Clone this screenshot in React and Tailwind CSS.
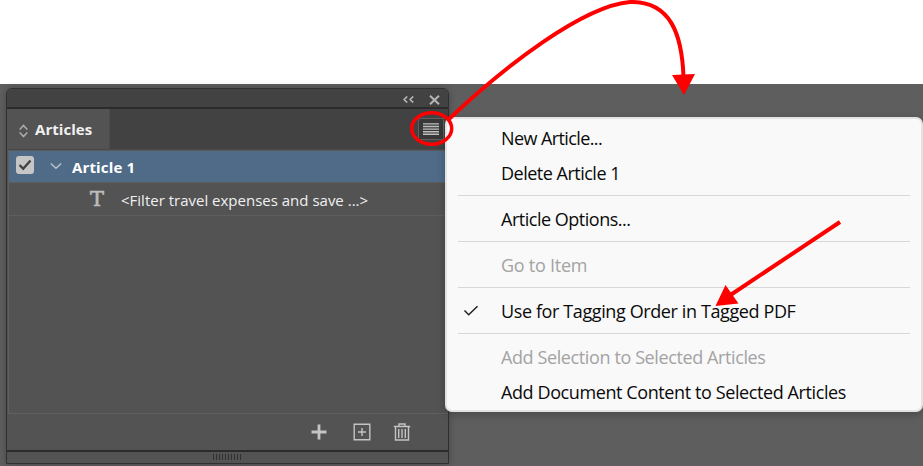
import React from "react";

const TEXT = "font-['Open_Sans','Noto_Sans',sans-serif] whitespace-nowrap";

function MenuItem({ children, disabled, checked, spacing }) {
  return (
    <div className={`flex h-[35px] items-center text-[18px] ${disabled ? "text-[#a3a3a3]" : "text-[#0a0a0a]"}`}>
      <div className="flex w-[54px] items-center pl-[16px]">
        {checked && (
          <svg className="mb-[2px] h-[14px] w-[16px]" viewBox="0 0 16 14" fill="none" stroke="#222" strokeWidth="1.5">
            <path d="M1.5 6.5 5.700 10.700 14.500 2.200" />
          </svg>
        )}
      </div>
      <span className={`${TEXT} ${spacing}`}>{children}</span>
    </div>
  );
}

function Separator() {
  return <div className="mx-[11px] mb-[6px] mt-[4px] h-px bg-[#d7d7d7]" />;
}

function ContextMenu() {
  return (
    <div className="absolute left-[445px] top-[117px] h-[295px] w-[478px] rounded-[7px] border-2 border-[#e3e3e3] bg-[#f9f9f9] pt-[2px] shadow-[0_3px_9px_rgba(0,0,0,0.22)]">
      <MenuItem spacing="tracking-[-0.6px]">New Article...</MenuItem>
      <MenuItem spacing="tracking-[-0.5px]">Delete Article 1</MenuItem>
      <Separator />
      <MenuItem spacing="tracking-[-0.48px]">Article Options...</MenuItem>
      <Separator />
      <MenuItem disabled spacing="tracking-[-0.25px]">Go to Item</MenuItem>
      <Separator />
      <MenuItem checked spacing="tracking-[-0.39px]">Use for Tagging Order in Tagged PDF</MenuItem>
      <Separator />
      <MenuItem disabled spacing="tracking-[-0.39px]">Add Selection to Selected Articles</MenuItem>
      <MenuItem spacing="tracking-[-0.4px]">Add Document Content to Selected Articles</MenuItem>
    </div>
  );
}

function Panel() {
  return (
    <div className="ml-[6px] mt-[4px] flex h-[376px] w-[443px] flex-col overflow-hidden rounded-t-[6px] border border-[#303030] bg-[#535353] shadow-[0_0_7px_rgba(0,0,0,0.25)]">
      <div className="flex h-[20px] shrink-0 items-center justify-end border-b-2 border-[#2b2b2b] bg-[#424242] pr-[8px] pt-[3px]">
        <svg className="mr-[15px] h-[7px] w-[11px]" viewBox="0 0 11 7" fill="none" stroke="#b4b4b4" strokeWidth="1.700">
          <path d="M4.200.5 1.200 3.500 4.200 6.500M10.200.5 7.200 3.500 10.200 6.500" />
        </svg>
        <svg className="h-[10px] w-[11px]" viewBox="0 0 11 10" stroke="#b4b4b4" strokeWidth="2">
          <path d="M1 .7 10 9.300M10 .7 1 9.300" />
        </svg>
      </div>
      <div className="flex h-[40px] shrink-0 bg-[#424242]">
        <div className="flex w-[103px] items-center border-r border-[#4b4b4b] bg-[#535353] pl-[12px] pt-px">
          <svg className="mt-[2px] h-[14px] w-[9px]" viewBox="0 0 9 14" fill="none" stroke="#aaa" strokeWidth="1.600">
            <path d="M1.200 5.700V5L4.500 1.500 7.800 5v.7M1.200 8.300V9l3.300 3.500L7.800 9v-.7" />
          </svg>
          <span className={`${TEXT} ml-[7px] text-[15px] font-bold tracking-[0.05px] text-[#f0f0f0]`}>Articles</span>
        </div>
        <div className="ml-auto mr-[4px] mt-[9px] flex h-[22px] w-[26px] items-center justify-center border border-[#606060] bg-[#383838]">
          <svg className="h-[12px] w-[16px]" viewBox="0 0 16 12" stroke="#c0c0c0" strokeWidth="1.400">
            <path d="M0 .9h16M0 3.500h16M0 6.100h16M0 8.700h16M0 11.300h16" />
          </svg>
        </div>
      </div>
      <div className="h-[2px] shrink-0 border-t border-[#494949] bg-[#5a5a5a]" />
      <div className="ml-px flex h-[263px] shrink-0 flex-col border-b border-l border-[#606060]">
        <div className="flex h-[32px] shrink-0 items-center border-b border-[#5e5e5e] bg-[#4f6b87] pl-[7px]">
          <div className="mb-[3px] flex size-[18px] items-center justify-center rounded-[3px] bg-[#c6c6c6]">
            <svg className="h-[12px] w-[14px]" viewBox="0 0 14 12" fill="none" stroke="#444" strokeWidth="2.400">
              <path d="M1.500 6 5.200 9.700 12.500 1.500" />
            </svg>
          </div>
          <svg className="mb-px ml-[16px] h-[8px] w-[12px]" viewBox="0 0 12 8" fill="none" stroke="#b9c2cb" strokeWidth="1.500">
            <path d="M.8 1.500 6 6.300 11.200 1.500" />
          </svg>
          <span className={`${TEXT} ml-[10px] mt-px text-[15px] font-bold tracking-[0.15px] text-white`}>Article 1</span>
        </div>
        <div className="flex h-[33px] shrink-0 items-center border-b border-[#5e5e5e] pl-[80px]">
          <span className="w-[16px] text-center font-['DejaVu_Serif',serif] text-[21px] leading-none text-[#bdbdbd] [-webkit-text-stroke:0.6px_#bdbdbd]">T</span>
          <span className={`${TEXT} ml-[16px] mt-[3px] text-[15px] text-[#f0f0f0]`}>&lt;Filter travel expenses and save ...&gt;</span>
        </div>
      </div>
      <div className="flex h-[36px] shrink-0 items-center pb-px pl-[304px]">
        <svg className="h-[16px] w-[16px]" viewBox="0 0 16 16" stroke="#c4c4c4" strokeWidth="2.800">
          <path d="M8 .5v15M.5 8h15" />
        </svg>
        <svg className="ml-[26px] h-[18px] w-[18px]" viewBox="0 0 18 18" fill="none" stroke="#c4c4c4" strokeWidth="1.400">
          <path d="M1.200 1.200h15.600v15.600H1.200zM9 5v8M5 9h8" />
        </svg>
        <svg className="ml-[22px] h-[18px] w-[18px]" viewBox="0 0 18 18" fill="none" stroke="#c4c4c4" strokeWidth="1.400">
          <path d="M.8 3.500h16.400M6 3V1h6v2M2.500 4v13h13V4M5.700 6v9M9 6v9M12.300 6v9" />
        </svg>
      </div>
      <div className="flex grow items-center justify-center border-t-2 border-[#2b2b2b]">
        <div className="mr-[2px] mb-[2px] flex h-[6px] gap-[2px]">
          {Array.from({ length: 10 }, (_, i) => (
            <div key={i} className="w-px bg-[#303030]" />
          ))}
        </div>
      </div>
    </div>
  );
}

export default function App() {
  return (
    <div className="relative h-[466px] w-[923px] overflow-hidden bg-white pt-[84px]">
      <div className="flex h-[382px] bg-[#5e5e5e]">
        <Panel />
      </div>
      <ContextMenu />
      <svg className="absolute left-0 top-0 h-[466px] w-[923px]" viewBox="0 0 923 466" fill="none" stroke="#f00">
        <ellipse cx="431.700" cy="128.500" rx="20" ry="15.800" strokeWidth="3.500" />
        <path d="M449 119C505 66 583 6 630 2C671 1 682 35 683.500 77" strokeWidth="4" />
        <path d="M672 75 695 74 684 95Z" fill="#f00" stroke="none" />
        <path d="M840 222 729 296" strokeWidth="4" />
        <path d="M715.500 306 725.500 285 738.500 303.500Z" fill="#f00" stroke="none" />
      </svg>
    </div>
  );
}
